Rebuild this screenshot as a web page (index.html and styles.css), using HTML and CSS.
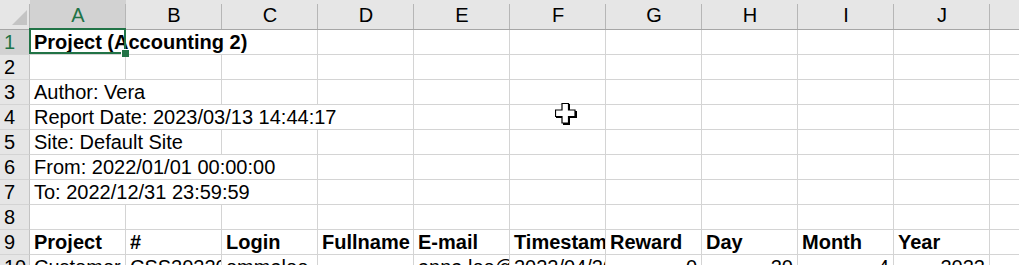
FILE: index.html
```
<!DOCTYPE html>
<html>
<head>
<meta name="viewport" content="width=device-width, initial-scale=1">
<link rel="stylesheet" href="styles.css">
</head>
<body>

<div class="sheet">
  <div class="row colhead">
    <div class="corner"><div class="tri"></div></div>
    <div class="ch sel">A</div>
    <div class="ch">B</div>
    <div class="ch">C</div>
    <div class="ch">D</div>
    <div class="ch">E</div>
    <div class="ch">F</div>
    <div class="ch">G</div>
    <div class="ch">H</div>
    <div class="ch">I</div>
    <div class="ch">J</div>
    <div class="ch last"></div>
  </div>

  <div class="row">
    <div class="rh sel">1</div>
    <div class="c span3 b">Project (Accounting 2)</div>
    <div class="c"></div><div class="c"></div><div class="c"></div><div class="c"></div>
    <div class="c"></div><div class="c"></div><div class="c"></div><div class="c end"></div>
  </div>

  <div class="row">
    <div class="rh">2</div>
    <div class="c"></div><div class="c"></div><div class="c"></div><div class="c"></div><div class="c"></div>
    <div class="c"></div><div class="c"></div><div class="c"></div><div class="c"></div><div class="c"></div>
    <div class="c end"></div>
  </div>

  <div class="row">
    <div class="rh">3</div>
    <div class="c span2">Author: Vera</div>
    <div class="c"></div><div class="c"></div><div class="c"></div><div class="c"></div>
    <div class="c"></div><div class="c"></div><div class="c"></div><div class="c"></div>
    <div class="c end"></div>
  </div>

  <div class="row">
    <div class="rh">4</div>
    <div class="c span4">Report Date: 2023/03/13 14:44:17</div>
    <div class="c"></div><div class="c"></div><div class="c"></div>
    <div class="c"></div><div class="c"></div><div class="c"></div>
    <div class="c end"></div>
  </div>

  <div class="row">
    <div class="rh">5</div>
    <div class="c span2">Site: Default Site</div>
    <div class="c"></div><div class="c"></div><div class="c"></div><div class="c"></div>
    <div class="c"></div><div class="c"></div><div class="c"></div><div class="c"></div>
    <div class="c end"></div>
  </div>

  <div class="row">
    <div class="rh">6</div>
    <div class="c span3">From: 2022/01/01 00:00:00</div>
    <div class="c"></div><div class="c"></div><div class="c"></div><div class="c"></div>
    <div class="c"></div><div class="c"></div><div class="c"></div>
    <div class="c end"></div>
  </div>

  <div class="row">
    <div class="rh">7</div>
    <div class="c span3">To: 2022/12/31 23:59:59</div>
    <div class="c"></div><div class="c"></div><div class="c"></div><div class="c"></div>
    <div class="c"></div><div class="c"></div><div class="c"></div>
    <div class="c end"></div>
  </div>

  <div class="row">
    <div class="rh">8</div>
    <div class="c"></div><div class="c"></div><div class="c"></div><div class="c"></div><div class="c"></div>
    <div class="c"></div><div class="c"></div><div class="c"></div><div class="c"></div><div class="c"></div>
    <div class="c end"></div>
  </div>

  <div class="row">
    <div class="rh">9</div>
    <div class="c b">Project</div>
    <div class="c b">#</div>
    <div class="c b">Login</div>
    <div class="c b">Fullname</div>
    <div class="c b">E-mail</div>
    <div class="c b">Timestamp</div>
    <div class="c b">Reward</div>
    <div class="c b">Day</div>
    <div class="c b">Month</div>
    <div class="c b">Year</div>
    <div class="c end"></div>
  </div>

  <div class="row">
    <div class="rh">10</div>
    <div class="c">Customer</div>
    <div class="c">CSS2022001</div>
    <div class="c">emmalee</div>
    <div class="c"></div>
    <div class="c">anna.lee@mail.com</div>
    <div class="c">2022/04/20 10:15:32</div>
    <div class="c num">0</div>
    <div class="c num">20</div>
    <div class="c num">4</div>
    <div class="c num">2022</div>
    <div class="c end"></div>
  </div>

  <!-- active cell A1 -->
  <div class="selection"><div class="handle"></div></div>

  <!-- mouse pointer -->
  <svg class="pointer" width="23" height="23" viewBox="0 0 23 23">
    <polygon points="8,1 15,1 15,8 22,8 22,15 15,15 15,22 8,22 8,15 1,15 1,8 8,8" fill="#000"/>
    <polygon points="7,0.5 13.5,0.5 13.5,7 20,7 20,13.5 13.5,13.5 13.5,20 7,20 7,13.5 0.5,13.5 0.5,7 7,7" fill="#fff" stroke="#000" stroke-width="1.2"/>
  </svg>
</div>

</body>
</html>
```

FILE: styles.css
```
body {
  margin: 0;
  background: #fff;
  font-family: "Liberation Sans", Arial, Helvetica, sans-serif;
  font-size: 20px;
  color: #000;
  overflow: hidden;
}

.sheet {
  position: relative;
  width: 1019px;
  height: 265px;
  overflow: hidden;
}

.row {
  display: grid;
  grid-template-columns: 30px repeat(10, 96px) 1fr;
  height: 25px;
}

.colhead {
  height: 30px;
  background: #e6e6e6;
  border-bottom: 1px solid #a6a6a6;
  box-sizing: border-box;
}

.corner {
  display: flex;
  align-items: flex-end;
  justify-content: flex-end;
  padding: 0 3px 4px 0;
  box-sizing: border-box;
  position: relative;
}

.tri {
  width: 15px;
  height: 15px;
  background: #c4c4c4;
  clip-path: polygon(100% 0, 100% 100%, 0 100%);
}

.ch {
  position: relative;
  text-align: center;
  line-height: 24px;
  padding-top: 3px;
  box-sizing: border-box;
}

/* header separators start a little below the top edge */
.ch::before,
.corner::after {
  content: "";
  position: absolute;
  top: 4px;
  bottom: 0;
  width: 1px;
  background: #b6b6b6;
}
.ch::before { left: -1px; }
.corner::after { right: 0; }

.ch.sel {
  background: #d2d2d2;
  color: #217346;
}

.rh {
  background: #e6e6e6;
  border-right: 1px solid #c4c4c4;
  border-bottom: 1px solid #d4d4d4;
  box-sizing: border-box;
  line-height: 24px;
  padding-left: 4px;
}

.rh.sel {
  background: #d2d2d2;
  color: #217346;
}

.c {
  border-right: 1px solid #d4d4d4;
  border-bottom: 1px solid #d4d4d4;
  box-sizing: border-box;
  line-height: 24px;
  padding: 0 4px;
  white-space: nowrap;
  overflow: hidden;
}

.c.end { border-right: none; }
.c.b { font-weight: bold; }
.c.num { text-align: right; }

.span2 { grid-column: span 2; }
.span3 { grid-column: span 3; }
.span4 { grid-column: span 4; }

.selection {
  position: absolute;
  left: 29px;
  top: 28px;
  width: 97px;
  height: 26px;
  border: 2px solid #217346;
  box-sizing: border-box;
}

.handle {
  position: absolute;
  right: -5px;
  bottom: -5px;
  width: 7px;
  height: 7px;
  background: #217346;
  border-left: 1px solid #fff;
  border-top: 1px solid #fff;
}

.pointer {
  position: absolute;
  left: 555px;
  top: 103px;
}
```
